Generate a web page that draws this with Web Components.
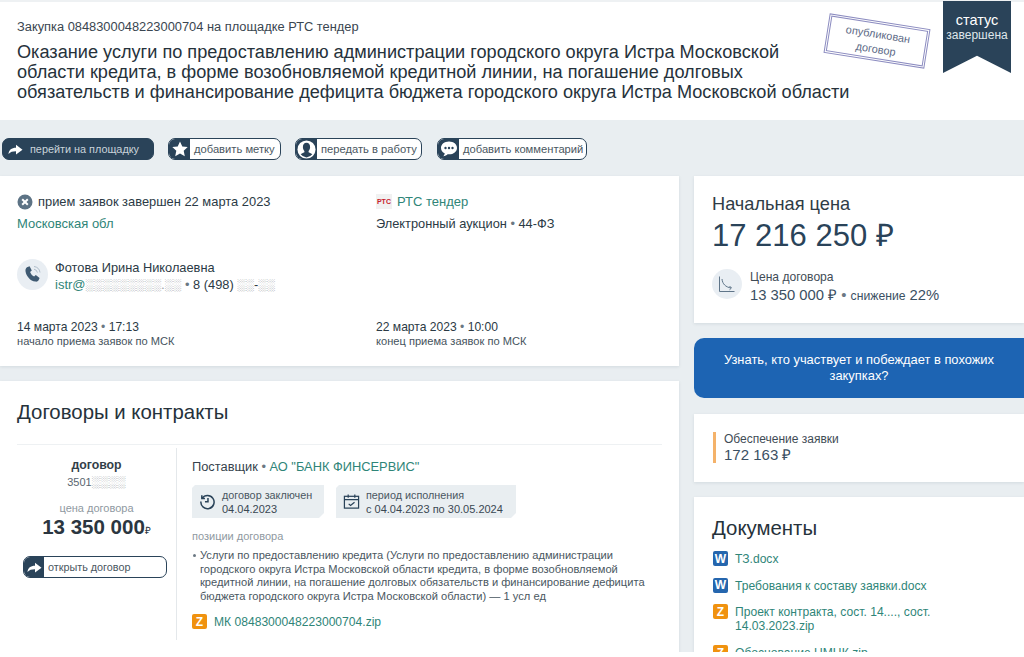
<!DOCTYPE html>
<html lang="ru">
<head>
<meta charset="utf-8">
<title>Закупка</title>
<style>
html, body { margin: 0; height: 657px; overflow: hidden; background: #fff; }
body { font-family: "Liberation Sans", Arial, sans-serif; color: #2b3a45; }
</style>
</head>
<body>
<tender-page></tender-page>
<script>
const FORWARD = '<path d="M1.500 14c.4-4.200 3-6.300 7.500-6.300V4.800l6.500 4.900L9 14.500v-3.200c-3.400 0-5.600.7-7.500 2.700z" fill="#fff"/>';
const ICONS = {
  forward: `<svg width="17" height="18" viewBox="0 0 17 18">${FORWARD}</svg>`,
  star: '<svg width="18" height="18" viewBox="0 0 18 18"><path d="M9 1.500l2.300 5 5.400.6-4 3.700 1.100 5.400L9 13.500l-4.800 2.700 1.100-5.400-4-3.700 5.400-.6z" fill="#fff"/></svg>',
  user: '<svg width="19" height="19" viewBox="0 0 20 20"><circle cx="10" cy="10" r="9.500" fill="#fff"/><path d="M10 3c2.500 0 3.800 2 3.800 4.400 0 1.800-.7 3.400-1.600 4.300v1.200c1.500.6 3 1.200 3.900 2.200A8.200 8.200 0 0 1 10 18.300 8.200 8.200 0 0 1 3.900 15c.9-1 2.400-1.600 3.900-2.200v-1.200c-.9-.9-1.600-2.500-1.600-4.200C6.200 5 7.500 3 10 3z" fill="#2a4359"/></svg>',
  comment: '<svg width="20" height="20" viewBox="0 0 20 20"><path d="M10 2.500c4.600 0 8 2.800 8 6.400s-3.400 6.400-8 6.400l-1.400-.1c-1 1.100-2.500 1.900-4.300 2 .8-.8 1.300-1.800 1.400-3C3.500 13.600 2 11.400 2 8.900c0-3.600 3.400-6.400 8-6.400z" fill="#fff"/><circle cx="6.500" cy="9" r="1.200" fill="#2a4359"/><circle cx="10" cy="9" r="1.200" fill="#2a4359"/><circle cx="13.500" cy="9" r="1.200" fill="#2a4359"/></svg>'
};

class ActionButton extends HTMLElement {
  constructor() {
    super();
    const icon = ICONS[this.getAttribute('icon')];
    this.attachShadow({ mode: 'open' }).innerHTML = `
<style>
:host { display: inline-flex; height: 22px; box-sizing: border-box; border: 1px solid #2a4359; border-radius: 7px; overflow: hidden; background: #fff; font-size: var(--size, 11.2px); color: #4a5761; white-space: nowrap; }
:host([solid]) { background: #2a4359; color: #c9d3da; }
.ico { display: flex; align-items: center; justify-content: center; width: var(--ico, 21px); background: #2a4359; flex: none; }
.txt { display: flex; align-items: center; padding: var(--pad, 0 0 0 4px); flex: 1; }
</style>
<span class="ico">${icon}</span><span class="txt"><slot></slot></span>`;
  }
}
customElements.define('action-button', ActionButton);

class WhiteCard extends HTMLElement {
  constructor() {
    super();
    this.attachShadow({ mode: 'open' }).innerHTML = `
<style>
:host { display: block; background: #fff; box-shadow: 0 1px 3px rgba(60,80,95,.12); box-sizing: border-box; }
</style><slot></slot>`;
  }
}
customElements.define('white-card', WhiteCard);

class FileBadge extends HTMLElement {
  constructor() {
    super();
    const kind = this.getAttribute('kind');
    this.attachShadow({ mode: 'open' }).innerHTML = `
<style>
:host { display: inline-flex; align-items: center; justify-content: center; width: 15px; height: 15px; border-radius: 2px; font: bold 12px "Liberation Sans", Arial, sans-serif; color: #fff; flex: none; background: ${kind === 'W' ? '#2566ae' : '#f0920f'}; }
</style>${kind}`;
  }
}
customElements.define('file-badge', FileBadge);

class DateChip extends HTMLElement {
  constructor() {
    super();
    const icon = this.getAttribute('icon') === 'clock'
      ? '<svg width="17" height="17" viewBox="0 0 18 18" fill="none" stroke="#2a4359" stroke-width="1.600"><path d="M3.300 5.500A7 7 0 1 1 2 9"/><path d="M3 2.500v3.300h3.300"/><path d="M9.500 5.300V9.300H6.300"/></svg>'
      : '<svg width="17" height="17" viewBox="0 0 18 18" fill="none" stroke="#2a4359" stroke-width="1.300"><rect x="1.500" y="3.500" width="15" height="12.500"/><path d="M1.500 7h15M5.500 1.500v3.500M12.500 1.500v3.500"/><path d="M6 11.500l2 1.800L12.200 9.800"/></svg>';
    this.attachShadow({ mode: 'open' }).innerHTML = `
<style>
:host { display: flex; align-items: center; gap: 6px; box-sizing: border-box; height: 33px; padding: 0 0 0 7px; background: #e9eef1; font-size: 10.8px; line-height: 14px; color: #4a5761; clip-path: polygon(3px 0, 100% 0, 100% calc(100% - 5px), calc(100% - 5px) 100%, 0 100%, 0 3px); }
b { font-weight: normal; font-size: 11px; color: #3a4853; display: block; }
svg { flex: none; }
</style>${icon}<span><slot name="k"></slot><b><slot></slot></b></span>`;
  }
}
customElements.define('date-chip', DateChip);

class DocRow extends HTMLElement {
  constructor() {
    super();
    this.attachShadow({ mode: 'open' }).innerHTML = `
<style>
:host { display: flex; gap: 7px; align-items: flex-start; font-size: 12.1px; line-height: 14px; color: #2f8578; }
span { padding-top: 1px; }
</style><file-badge kind="${this.getAttribute('kind')}"></file-badge><span><slot></slot></span>`;
  }
}
customElements.define('doc-row', DocRow);

class PageHeader extends HTMLElement {
  constructor() {
    super();
    this.attachShadow({ mode: 'open' }).innerHTML = `
<style>
:host { display: block; position: relative; height: 120px; box-sizing: border-box; background: #fff; border-top: 2px solid #eef1f3; padding: 17px 0 0 17px; color: #2b3a45; }
.num { font-size: 12.85px; line-height: 15px; color: #3a4650; }
h1 { margin: 8px 0 0; font-weight: normal; font-size: 18.15px; line-height: 20px; white-space: nowrap; color: #26323b; }
.ribbon { position: absolute; top: -1px; right: 13px; width: 68px; height: 72px; background: #2a4359; color: #fff; text-align: center; clip-path: polygon(0 0, 100% 0, 100% 100%, 50% 76%, 0 100%); box-sizing: border-box; padding-top: 11px; }
.ribbon b { display: block; font-weight: normal; font-size: 14.5px; line-height: 16px; }
.ribbon i { display: block; font-style: normal; font-size: 12px; line-height: 14px; color: #dfe6ea; }
.stamp { position: absolute; top: 19px; left: 826px; width: 102px; height: 40px; box-sizing: border-box; border: 3px double #8c8cc0; transform: rotate(9deg); text-align: center; font-size: 11px; line-height: 15px; color: #5d6a86; padding-top: 3px; }
</style>
<div class="num">Закупка 0848300048223000704 на площадке РТС тендер</div>
<h1>Оказание услуги по предоставлению администрации городского округа Истра Московской<br>области кредита, в форме возобновляемой кредитной линии, на погашение долговых<br>обязательств и финансирование дефицита бюджета городского округа Истра Московской области</h1>
<div class="stamp">опубликован<br>договор</div>
<div class="ribbon"><b>статус</b><i>завершена</i></div>`;
  }
}
customElements.define('page-header', PageHeader);

class PurchaseCard extends HTMLElement {
  constructor() {
    super();
    this.attachShadow({ mode: 'open' }).innerHTML = `
<style>
:host { display: block; }
white-card { height: 190px; padding: 17px 17px 0; font-size: 12.8px; line-height: 15px; color: #2b3a45; }
.cols { display: grid; grid-template-columns: 359px 1fr; }
.line { display: flex; align-items: center; gap: 5px; height: 17px; font-size: 12.9px; }
.link { color: #2f8578; font-size: 13px; }
.second { margin-top: 6px; height: 16px; }
.contact { display: flex; gap: 7px; height: 32px; margin-top: 27px; }
.phone { width: 31px; height: 31px; flex: none; border-radius: 50%; background: #e9eef3; display: flex; align-items: center; justify-content: center; }
.contact .who { line-height: 17px; }
.mask { color: #8f979d; font-size: 11.9px; }
.dates { margin-top: 29px; }
.dates b { display: block; font-weight: normal; font-size: 12.1px; line-height: 15px; }
.dates i { display: block; font-style: normal; font-size: 11.1px; line-height: 13px; color: #46535d; }
.dot { color: #6b7883; }
.rts { width: 16px; height: 15px; background: #f1f1f1; color: #c8202c; font: bold 7px "Liberation Sans", sans-serif; display: flex; align-items: center; justify-content: center; flex: none; }
</style>
<white-card>
  <div class="cols">
    <div>
      <div class="line"><svg width="16" height="16" viewBox="0 0 16 16"><circle cx="8" cy="8" r="7.500" fill="#5d7385"/><path d="M5.200 5.200l5.600 5.600M10.800 5.200l-5.600 5.600" stroke="#fff" stroke-width="2"/></svg>прием заявок завершен 22 марта 2023</div>
      <div class="second link">Московская обл</div>
    </div>
    <div>
      <div class="line"><span class="rts">РТС</span><span class="link">РТС тендер</span></div>
      <div class="second">Электронный аукцион <span class="dot">•</span> 44-ФЗ</div>
    </div>
  </div>
  <div class="contact">
    <div class="phone"><svg width="21" height="21" viewBox="0 0 21 21"><path d="M5 3.200l2.600-1 2.200 4.300-1.700 1.500c.6 1.800 2.200 3.700 4 4.600l1.700-1.500 3.800 2.800-1 2.400c-.6 1.200-2 1.700-3.300 1.300C8.300 16.900 4.300 12.300 3.500 7.200 3.300 5.500 3.800 4 5 3.200z" fill="#3f5a72"/><path d="M12 2.500a7 7 0 0 1 6 6M12 5.200a4.300 4.300 0 0 1 3.400 3.400" fill="none" stroke="#9fb0bf" stroke-width=".8"/></svg></div>
    <div class="who">
      <div>Фотова Ирина Николаевна</div>
      <div><span class="link">istr@</span><span class="mask">░░░░░░░░░.░░</span> <span class="dot">•</span> 8 (498) <span class="mask">░░</span>-<span class="mask">░░</span></div>
    </div>
  </div>
  <div class="cols dates">
    <div><b>14 марта 2023 <span class="dot">•</span> 17:13</b><i>начало приема заявок по МСК</i></div>
    <div><b>22 марта 2023 <span class="dot">•</span> 10:00</b><i>конец приема заявок по МСК</i></div>
  </div>
</white-card>`;
  }
}
customElements.define('purchase-card', PurchaseCard);

class ContractsCard extends HTMLElement {
  constructor() {
    super();
    this.attachShadow({ mode: 'open' }).innerHTML = `
<style>
:host { display: block; }
white-card { height: 290px; padding: 20px 17px 0; color: #2b3a45; }
h2 { margin: 0; font-weight: normal; font-size: 20.4px; line-height: 23px; color: #26323b; }
.row { display: grid; grid-template-columns: 160px 1fr; margin-top: 20px; border-top: 1px solid #eef1f3; padding-top: 3px; }
.side { height: 192px; border-right: 1px solid #e4e8eb; text-align: center; box-sizing: border-box; padding-top: 10px; }
.side .t { font-weight: bold; font-size: 12.3px; line-height: 15px; color: #333f49; }
.side .n { font-size: 11px; line-height: 15px; color: #5a6670; margin-top: 2px; }
.mask { color: #8f979d; font-size: 12px; }
.side .k { font-size: 11px; line-height: 14px; color: #8f99a1; margin-top: 11px; }
.side .v { font-weight: bold; font-size: 20.5px; line-height: 22px; color: #2b3640; margin-top: 1px; }
.side .v small { font-weight: normal; font-size: 10px; }
action-button { --ico: 20px; --pad: 0 0 0 4px; --size: 10.8px; width: 144px; margin: 14px 9px 0 6px; display: flex; text-align: left; }
.main { padding: 11px 0 0 15px; }
.sup { font-size: 12.85px; line-height: 16px; color: #36434d; }
.link { color: #2f8578; }
.chips { display: grid; grid-template-columns: 132px 180px; gap: 12px; margin-top: 10px; }
.cap { font-size: 11px; line-height: 14px; color: #8f99a1; margin-top: 11px; }
.item { font-size: 11.13px; line-height: 13.5px; color: #4a5761; margin: 6px 0 0 8px; position: relative; width: 462px; }
.item:before { content: ""; position: absolute; left: -7px; top: 5px; width: 3px; height: 3px; border-radius: 50%; background: #6b7883; }
doc-row { margin-top: 11px; }
</style>
<white-card>
  <h2>Договоры и контракты</h2>
  <div class="row">
    <div class="side">
      <div class="t">договор</div>
      <div class="n">3501<span class="mask">░░░░</span></div>
      <div class="k">цена договора</div>
      <div class="v">13 350 000<small>₽</small></div>
      <action-button icon="forward">открыть договор</action-button>
    </div>
    <div class="main">
      <div class="sup">Поставщик <span style="color:#6b7883">•</span> <span class="link">АО "БАНК ФИНСЕРВИС"</span></div>
      <div class="chips">
        <date-chip icon="clock"><span slot="k">договор заключен</span>04.04.2023</date-chip>
        <date-chip icon="cal"><span slot="k">период исполнения</span>с 04.04.2023 по 30.05.2024</date-chip>
      </div>
      <div class="cap">позиции договора</div>
      <div class="item">Услуги по предоставлению кредита (Услуги по предоставлению администрации городского округа Истра Московской области кредита, в форме возобновляемой кредитной линии, на погашение долговых обязательств и финансирование дефицита бюджета городского округа Истра Московской области) — 1 усл ед</div>
      <doc-row kind="Z">МК 0848300048223000704.zip</doc-row>
    </div>
  </div>
</white-card>`;
  }
}
customElements.define('contracts-card', ContractsCard);

class SideColumn extends HTMLElement {
  constructor() {
    super();
    this.attachShadow({ mode: 'open' }).innerHTML = `
<style>
:host { display: flex; flex-direction: column; gap: 15px; color: #2b3a45; }
.price { height: 147px; padding: 18px 18px 0; }
.price .k { font-size: 18.2px; line-height: 20px; color: #2f3c46; }
.price .v { font-size: 31px; line-height: 36px; color: #2a4359; margin-top: 4px; }
.deal { display: flex; gap: 8px; margin-top: 15px; }
.graph { width: 30px; height: 30px; flex: none; border-radius: 50%; background: #e9eef3; display: flex; align-items: center; justify-content: center; }
.deal .a { font-size: 12.1px; line-height: 14px; color: #3f4c56; padding-top: 1px; }
.deal .b { font-size: 14.8px; line-height: 20px; color: #3b5063; margin-top: 1px; }
.deal .b small { font-size: 12.2px; }
.ask { display: block; height: 60px; box-sizing: border-box; padding: 14px 20px 0; border-radius: 10px 0 0 10px; background: #1d64b3; color: #fff; text-align: center; font-size: 12.9px; line-height: 15.5px; }
.secure { height: 68px; margin-top: 1px; padding: 19px 18px 0 19px; }
.secure div { border-left: 3px solid #f4b26a; padding-left: 8px; height: 31px; }
.secure .a { display: block; font-size: 12px; line-height: 14px; color: #3f4c56; margin-top: -1px; }
.secure .b { display: block; font-size: 15px; line-height: 17px; color: #3b5063; }
.docs { height: 170px; padding: 19px 18px 0; overflow: hidden; }
h2 { margin: 0; font-weight: normal; font-size: 20.4px; line-height: 24px; color: #26323b; }
.list { display: flex; flex-direction: column; gap: 11.7px; margin: 11px 0 0 1px; width: 240px; }
</style>
<white-card class="price">
  <div class="k">Начальная цена</div>
  <div class="v">17 216 250 ₽</div>
  <div class="deal">
    <div class="graph"><svg width="20" height="20" viewBox="0 0 20 20" fill="none" stroke="#5f7589" stroke-width="1"><path d="M2.500 2.500v15h15"/><path d="M5 5c.5 5 3.500 8 9 9"/><path d="M12.500 12l2 2-2 1.800"/></svg></div>
    <div>
      <div class="a">Цена договора</div>
      <div class="b">13 350 000 ₽ <span style="color:#6b7883">•</span> <small>снижение</small> 22%</div>
    </div>
  </div>
</white-card>
<div class="ask">Узнать, кто участвует и побеждает в похожих закупках?</div>
<white-card class="secure"><div><span class="a">Обеспечение заявки</span><span class="b">172 163 ₽</span></div></white-card>
<white-card class="docs">
  <h2>Документы</h2>
  <div class="list">
    <doc-row kind="W">ТЗ.docx</doc-row>
    <doc-row kind="W">Требования к составу заявки.docx</doc-row>
    <doc-row kind="Z">Проект контракта, сост. 14...., сост. 14.03.2023.zip</doc-row>
    <doc-row kind="Z">Обоснование НМЦК.zip</doc-row>
  </div>
</white-card>`;
  }
}
customElements.define('side-column', SideColumn);

class TenderPage extends HTMLElement {
  constructor() {
    super();
    this.attachShadow({ mode: 'open' }).innerHTML = `
<style>
:host { display: block; height: 652px; overflow: hidden; background: #e9eef1; }
.bar { display: flex; height: 56px; align-items: center; padding: 2px 0 0 2px; box-sizing: border-box; gap: 14px; }
.bar action-button:nth-child(1) { width: 152px; --ico: 24px; --pad: 0 0 0 3px; --size: 10.85px; }
.bar action-button:nth-child(2) { width: 113px; }
.bar action-button:nth-child(3) { width: 127px; }
.bar action-button:nth-child(4) { width: 150px; margin-left: 1px; }
.layout { display: grid; grid-template-columns: 679px 330px; column-gap: 15px; width: 1024px; }
.left { display: flex; flex-direction: column; gap: 15px; }
</style>
<page-header></page-header>
<div class="bar">
  <action-button icon="forward" solid>перейти на площадку</action-button>
  <action-button icon="star">добавить метку</action-button>
  <action-button icon="user">передать в работу</action-button>
  <action-button icon="comment">добавить комментарий</action-button>
</div>
<div class="layout">
  <div class="left"><purchase-card></purchase-card><contracts-card></contracts-card></div>
  <side-column></side-column>
</div>`;
  }
}
customElements.define('tender-page', TenderPage);
</script>
</body>
</html>
